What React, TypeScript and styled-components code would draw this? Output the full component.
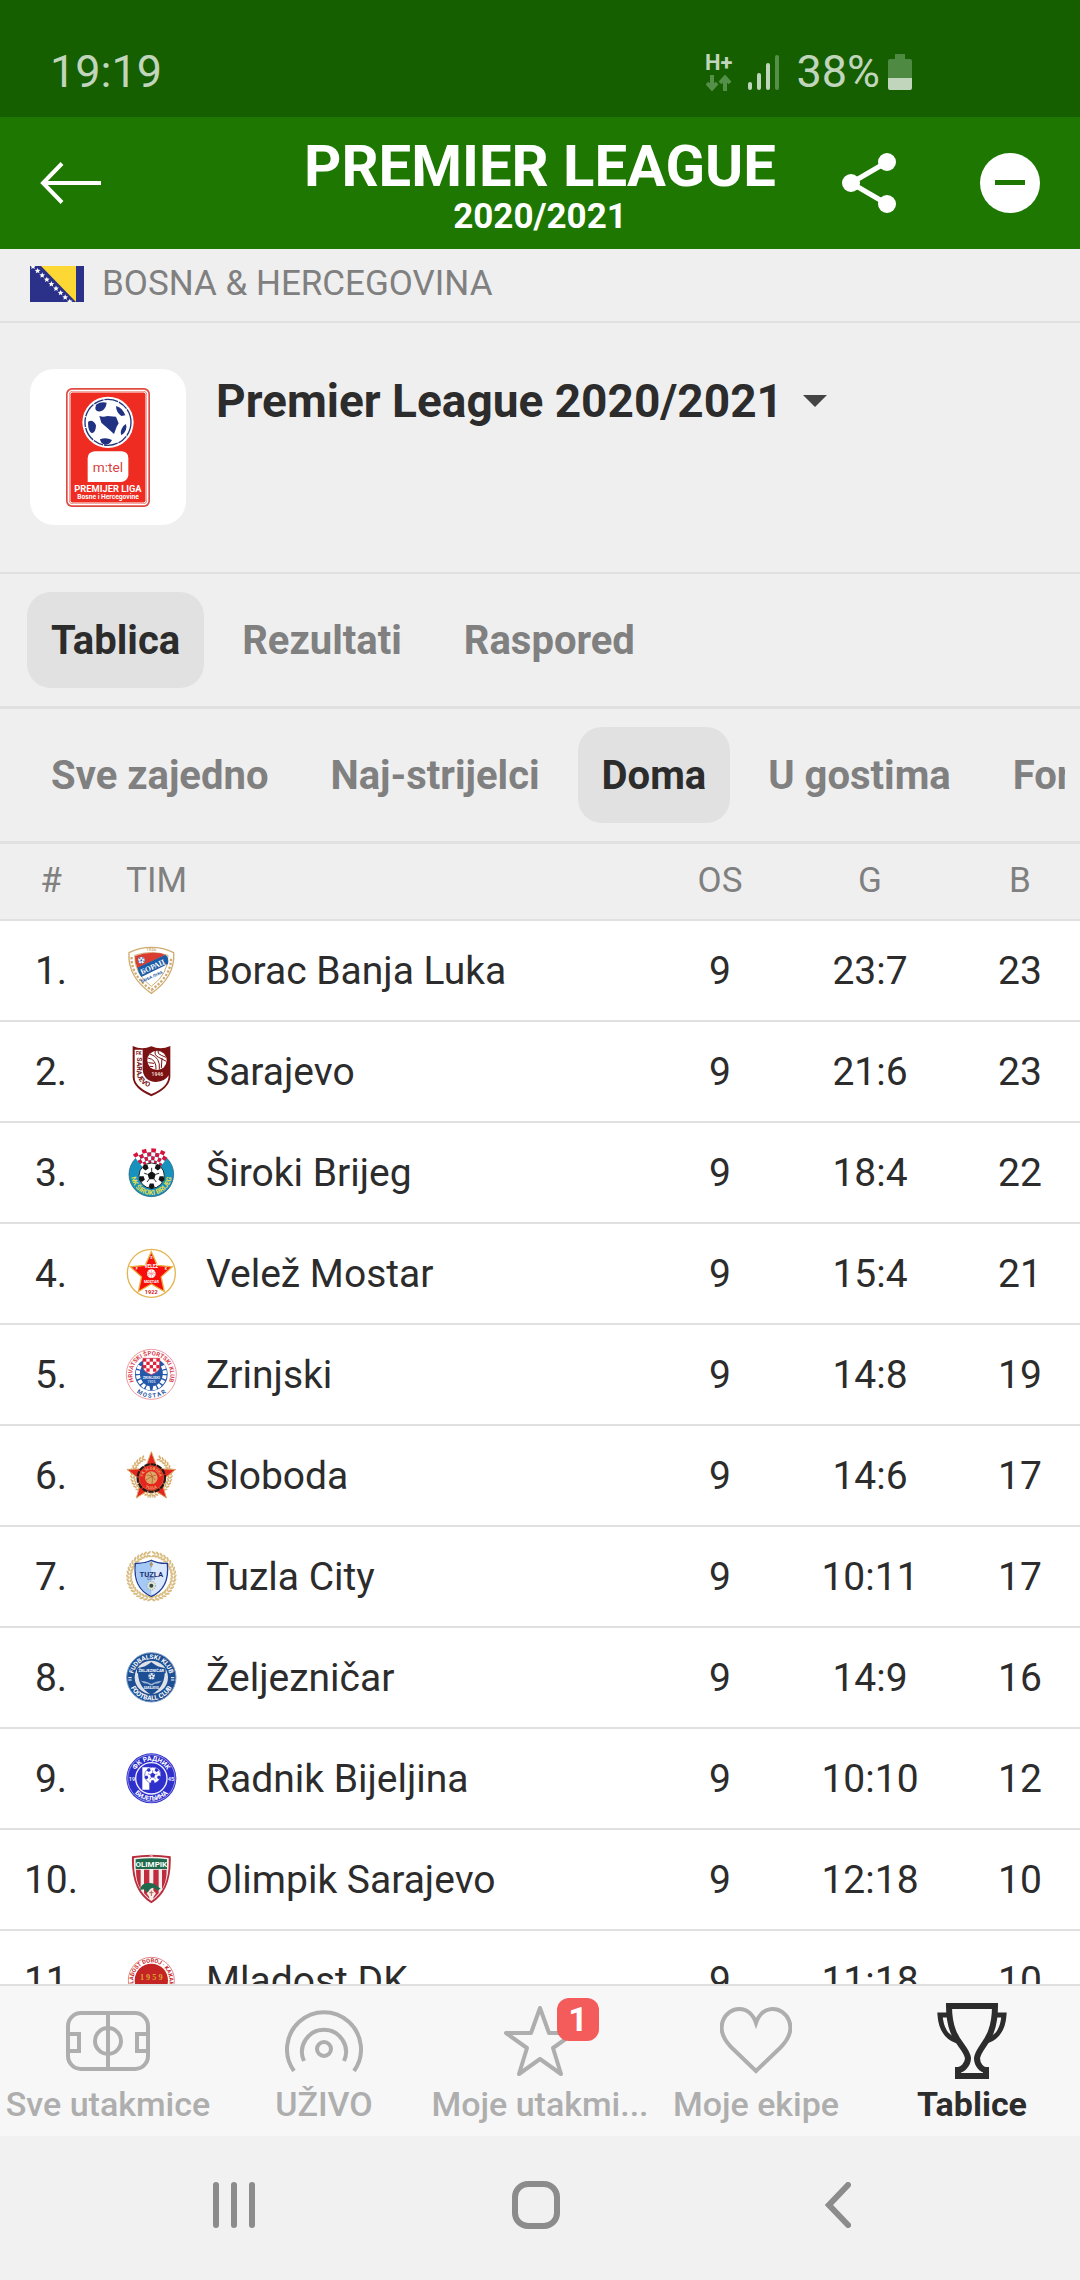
import React, { useState } from "react";
import styled, { createGlobalStyle } from "styled-components";

const color = {
  status: "#155f00",
  header: "#1d7700",
  page: "#efefef",
  line: "#e0e0e0",
  ink: "#2c2c2c",
  muted: "#808080",
  faint: "#aeaeae",
  statusInk: "#c1d5bc",
  statusDim: "#55904a",
};

const GlobalStyle = createGlobalStyle`
  * { box-sizing: border-box; }
  body { margin: 0; background: ${color.page}; }
  body, button, select, table { font-family: Roboto, "Noto Sans", sans-serif; }
  button { border: 0; padding: 0; background: none; color: inherit; cursor: pointer; }
  svg { display: block; flex: none; }
`;

const Screen = styled.div`
  display: flex;
  flex-direction: column;
  height: 100vh;
  overflow: hidden;
  color: ${color.ink};
  background: ${color.page};
`;

const StatusBar = styled.div`
  display: flex;
  align-items: center;
  justify-content: space-between;
  flex: none;
  height: 117px;
  padding: 27px 168px 0 50px;
  background: ${color.status};
  color: ${color.statusInk};
  font-size: 45px;
  line-height: 54px;
`;

const StatusIcons = styled.div`
  display: flex;
  align-items: center;
  gap: 16px;
`;

const BatteryGroup = styled.div`
  display: flex;
  align-items: center;
  gap: 8px;
`;

const NetworkType = styled.div`
  display: flex;
  flex-direction: column;
  align-items: center;
  gap: 2px;
  font-size: 22px;
  line-height: 20px;
  font-weight: 700;
`;

const Header = styled.header`
  display: grid;
  grid-template-columns: 1fr auto 1fr;
  align-items: center;
  flex: none;
  height: 132px;
  padding: 0 40px;
  background: ${color.header};
  color: #fff;
`;

const HeaderTitles = styled.div`
  padding-top: 8px;
  text-align: center;
  font-weight: 700;
`;

const HeaderTitle = styled.h1`
  margin: 0;
  font-size: 58px;
  line-height: 60px;
`;

const HeaderSeason = styled.div`
  font-size: 35px;
  line-height: 42px;
`;

const HeaderActions = styled.div`
  display: flex;
  align-items: center;
  justify-content: flex-end;
  gap: 84px;
`;

const IconButton = styled.button`
  display: flex;
  justify-self: start;
`;

const CountryBar = styled.div`
  display: flex;
  align-items: center;
  gap: 18px;
  flex: none;
  height: 74px;
  padding: 0 30px 2px;
  border-bottom: 2px solid ${color.line};
  color: ${color.muted};
  font-size: 35px;
  line-height: 40px;
`;

const LeagueBar = styled.section`
  display: flex;
  align-items: flex-start;
  gap: 30px;
  flex: none;
  padding: 46px 30px 47px;
  border-bottom: 2px solid ${color.line};
`;

const LogoCard = styled.div`
  display: flex;
  align-items: center;
  justify-content: center;
  width: 156px;
  height: 156px;
  border-radius: 24px;
  background: #fff;
`;

const SeasonPicker = styled.label`
  display: flex;
  align-items: center;
  gap: 20px;
  padding-top: 4px;
`;

const SeasonSelect = styled.select`
  appearance: none;
  border: 0;
  padding: 0;
  background: none;
  color: ${color.ink};
  font-size: 46px;
  font-weight: 700;
  line-height: 56px;
`;

const TabBar = styled.nav`
  display: flex;
  align-items: center;
  flex: none;
  height: 135px;
  padding: 0 15px;
  border-bottom: 3px solid ${color.line};
`;

const TabScroller = styled.div`
  display: flex;
  gap: 14px;
  padding-left: 12px;
  overflow: hidden;
`;

const Tab = styled.button<{ $active: boolean }>`
  flex: none;
  height: 96px;
  padding: 0 24px;
  border-radius: 24px;
  background: ${(p) => (p.$active ? "#e1e1e1" : "transparent")};
  color: ${(p) => (p.$active ? color.ink : color.muted)};
  font-size: 40px;
  font-weight: 700;
`;

const TableArea = styled.main`
  flex: 1;
  min-height: 0;
  overflow-y: auto;
  scrollbar-width: none;
  background: #fff;
`;

const Table = styled.table`
  width: 100%;
  border-collapse: separate;
  border-spacing: 0;
  table-layout: fixed;
`;

const RankCol = styled.col`
  width: 102px;
`;
const CrestCol = styled.col`
  width: 104px;
`;
const PlayedCol = styled.col`
  width: 120px;
`;
const GoalsCol = styled.col`
  width: 180px;
`;
const PointsCol = styled.col`
  width: 120px;
`;

const HeadCell = styled.th<{ $left?: boolean }>`
  height: 77px;
  padding: 0 0 2px;
  border-bottom: 2px solid ${color.line};
  background: ${color.page};
  color: ${color.muted};
  font-size: 35px;
  font-weight: 400;
  line-height: 40px;
  text-align: ${(p) => (p.$left ? "left" : "center")};
  padding-left: ${(p) => (p.$left ? "24px" : "0")};
`;

const Cell = styled.td<{ $left?: boolean }>`
  height: 101px;
  padding: 0;
  border-bottom: 2px solid ${color.line};
  font-size: 39px;
  line-height: 48px;
  text-align: ${(p) => (p.$left ? "left" : "center")};
  white-space: nowrap;
`;

const CrestCell = styled(Cell)`
  padding-left: 24px;
`;

const BottomNav = styled.nav`
  display: grid;
  grid-template-columns: repeat(5, 1fr);
  flex: none;
  height: 152px;
  border-top: 2px solid ${color.line};
  background: #f7f7f7;
`;

const NavItem = styled.button<{ $active?: boolean }>`
  display: flex;
  flex-direction: column;
  align-items: center;
  justify-content: flex-start;
  padding-top: 12px;
  min-width: 0;
  color: ${(p) => (p.$active ? color.ink : color.faint)};
  font-size: 34px;
  font-weight: ${(p) => (p.$active ? 700 : 500)};
  line-height: 40px;
  white-space: nowrap;
`;

const NavIcon = styled.span`
  position: relative;
  display: flex;
  align-items: center;
  justify-content: center;
  height: 86px;
  width: 90px;
`;

const Badge = styled.span`
  position: absolute;
  top: 0;
  right: -14px;
  width: 42px;
  height: 43px;
  border-radius: 12px;
  background: #f45b5b;
  color: #fff;
  font-size: 34px;
  font-weight: 700;
  line-height: 43px;
  text-align: center;
`;

const SystemNav = styled.div`
  display: grid;
  grid-template-columns: repeat(3, 1fr);
  align-items: center;
  justify-items: center;
  flex: none;
  height: 144px;
  padding: 0 91px 6px 83px;
  background: #f1f1f1;
  color: #8c8c8c;
`;

const SystemButton = styled.button`
  display: flex;
`;

/* ---------- crest helpers (153 x 153 drawing units) ---------- */

const C = 76;

function Crest({ name, children }: { name: string; children: React.ReactNode }) {
  return (
    <svg width="51" height="51" viewBox="0 0 153 153" role="img" aria-label={name} overflow="visible">
      {children}
    </svg>
  );
}

function polar(cx: number, cy: number, r: number, deg: number) {
  const a = ((deg - 90) * Math.PI) / 180;
  return `${(cx + r * Math.cos(a)).toFixed(1)} ${(cy + r * Math.sin(a)).toFixed(1)}`;
}

function starPoints(cx: number, cy: number, outer: number, inner: number) {
  return Array.from({ length: 10 }, (_, i) => polar(cx, cy, i % 2 ? inner : outer, i * 36)).join(" ");
}

type ArcTextProps = {
  id: string;
  r: number;
  text: string;
  fill: string;
  size: number;
  bottom?: boolean;
  cy?: number;
};

function ArcText({ id, r, text, fill, size, bottom, cy = C }: ArcTextProps) {
  const d = bottom
    ? `M${polar(C, cy, r, 310)}A${r} ${r} 0 1 0 ${polar(C, cy, r, 50)}`
    : `M${polar(C, cy, r, 230)}A${r} ${r} 0 1 1 ${polar(C, cy, r, 130)}`;
  return (
    <>
      <path id={id} d={d} fill="none" />
      <text fill={fill} fontSize={size} fontWeight="700" textAnchor="middle" fontFamily="Roboto, sans-serif">
        <textPath href={`#${id}`} startOffset="50%">
          {text}
        </textPath>
      </text>
    </>
  );
}

function Label({ x = C, y, size, fill, children, transform, serif }: {
  x?: number; y: number; size: number; fill: string; children: string; transform?: string; serif?: boolean;
}) {
  return (
    <text
      x={x} y={y} fontSize={size} fill={fill} fontWeight="700" textAnchor="middle" transform={transform}
      fontFamily={serif ? '"Liberation Serif", serif' : "Roboto, sans-serif"}
    >
      {children}
    </text>
  );
}

function Ball({ cx, cy, r, dark, light = "#fff" }: { cx: number; cy: number; r: number; dark: string; light?: string }) {
  const penta = (x: number, y: number, s: number, rot: number) =>
    Array.from({ length: 5 }, (_, i) => polar(x, y, s, rot + i * 72)).join(" ");
  return (
    <g>
      <circle cx={cx} cy={cy} r={r} fill={light} stroke={dark} strokeWidth={r / 14} />
      <polygon points={penta(cx, cy, r * 0.34, 0)} fill={dark} />
      {[0, 72, 144, 216, 288].map((a) => {
        const [x, y] = polar(cx, cy, r * 0.82, a + 36).split(" ").map(Number);
        const [sx, sy] = polar(cx, cy, r * 0.34, a).split(" ").map(Number);
        const [ex, ey] = polar(cx, cy, r * 0.62, a).split(" ").map(Number);
        return (
          <g key={a}>
            <polygon points={penta(x, y, r * 0.25, a + 36)} fill={dark} />
            <path d={`M${sx} ${sy}L${ex} ${ey}`} stroke={dark} strokeWidth={r / 14} />
          </g>
        );
      })}
    </g>
  );
}

function Laurel({ r, size, from, to, fill, count }: { r: number; size: number; from: number; to: number; fill: string; count: number }) {
  return (
    <g fill={fill}>
      {Array.from({ length: count }, (_, i) => {
        const deg = from + ((to - from) * i) / (count - 1);
        const tilt = deg > 180 ? -32 : 32;
        return (
          <g key={i} transform={`rotate(${deg} ${C} ${C})`}>
            <ellipse cx={C} cy={C - r} rx={size * 0.62} ry={size * 0.26} transform={`rotate(${tilt} ${C} ${C - r})`} />
            <ellipse cx={C} cy={C - r + size * 0.8} rx={size * 0.62} ry={size * 0.26} transform={`rotate(${-tilt} ${C} ${C - r + size * 0.8})`} />
          </g>
        );
      })}
    </g>
  );
}

function Borac() {
  return (
    <Crest name="Borac Banja Luka">
      <path d="M9 23Q40 7 76 7Q112 7 143 23Q148 96 76 145Q4 96 9 23Z" fill="#fff" stroke="#cfac71" strokeWidth="4" />
      <path d="M17 36Q14 90 76 135Q138 90 135 36" fill="none" stroke="#cfac71" strokeWidth="7" strokeDasharray="7 5" />
      <path d="M26 31Q76 14 126 31Q128 86 76 124Q24 86 26 31Z" fill="#fff" stroke="#cfac71" strokeWidth="3" />
      <path d="M27 33Q64 20 104 25L118 30L34 70Q26 52 27 33Z" fill="#da3d30" />
      <path d="M34 68L118 29Q130 36 126 57L46 96Q38 86 34 68Z" fill="#1c5ca6" />
      <Ball cx={46} cy={46} r={10} dark="#2c5fb0" />
      <Label x={80} y={73} size={23} fill="#fff" transform="rotate(-24 80 66)" serif>БОРАЦ</Label>
      <Label y={98} size={12} fill="#1c5ca6" transform="rotate(-24 80 92)">БАЊА ЛУКА</Label>
      <Label y={19} size={13} fill="#cfac71">1926</Label>
    </Crest>
  );
}

function Sarajevo() {
  return (
    <Crest name="Sarajevo">
      <path d="M20 0Q48 13 76 1Q104 13 133 0V94Q130 128 76 151Q22 128 20 94Z" fill="#7a1214" />
      <path d="M26 11Q38 12 50 11V72Q54 106 90 108Q118 106 128 88Q128 124 76 144Q26 122 26 94Z" fill="#fff" />
      <circle cx="93" cy="43" r="29" fill="#fff" />
      <path d="M66 36Q92 40 90 71M72 24Q104 34 100 70M88 15Q84 28 98 34L121 46M96 15Q94 24 106 28L120 34M108 36L106 66M67 50L84 52M72 61L82 62" fill="none" stroke="#7a1214" strokeWidth="3" />
      <Label x={94} y={91} size={15} fill="#efd9c8">1946</Label>
      <Label x={38} y={28} size={14} fill="#7a1214">FK</Label>
      <path id="sarajevo-arc" d="M32 34V80Q36 116 78 126Q100 120 118 106" fill="none" />
      <text fontSize="21" fontWeight="700" fill="#7a1214" fontFamily="Roboto, sans-serif">
        <textPath href="#sarajevo-arc">SARAJEVO</textPath>
      </text>
    </Crest>
  );
}

function Siroki() {
  const cells = [];
  for (let row = 0; row < 4; row++) {
    for (let col = 0; col < 8; col++) {
      const a0 = -38 + col * 9.5;
      const r0 = 90 - row * 12;
      const p = [
        polar(C, 94, r0, a0), polar(C, 94, r0, a0 + 9.5),
        polar(C, 94, r0 - 12, a0 + 9.5), polar(C, 94, r0 - 12, a0),
      ].join(" ");
      cells.push(<polygon key={`${row}-${col}`} points={p} fill={(row + col) % 2 ? "#fff" : "#d8143c"} />);
    }
  }
  return (
    <Crest name="Široki Brijeg">
      <circle cx={C} cy="82" r="67" fill="#1792bf" stroke="#24576c" strokeWidth="2" />
      {cells}
      <Ball cx={77} cy={86} r={38} dark="#141414" />
      <ArcText id="siroki-arc" r={61} cy={83} text="NK ŠIROKI BRIJEG" fill="#e9df4c" size={21} bottom />
    </Crest>
  );
}

function Velez() {
  return (
    <Crest name="Velež Mostar">
      <circle cx={C} cy={C} r="72" fill="#fff" stroke="#e2b552" strokeWidth="4" />
      <polygon points={starPoints(76, 77, 66, 31)} fill="#f80d0d" stroke="#e9b040" strokeWidth="4" />
      <Label y={32} size={11} fill="#fff">S</Label>
      <Label x={32} y={66} size={11} fill="#fff">F</Label>
      <Label x={120} y={66} size={11} fill="#fff">K</Label>
      <Label y={60} size={14} fill="#fff">VELEŽ</Label>
      <circle cx={C} cy="77" r="13" fill="#fff" />
      <path d="M66 70L86 84M66 84L86 70M76 64V90M63 77H89" stroke="#f88" strokeWidth="2" />
      <Label y={105} size={11} fill="#fff">MOSTAR</Label>
      <Label y={138} size={17} fill="#d02020">1922</Label>
    </Crest>
  );
}

function Zrinjski() {
  return (
    <Crest name="Zrinjski">
      <circle cx={C} cy={C} r="75" fill="#fff" stroke="#e26a75" strokeWidth="2" />
      <ArcText id="zrinjski-top" r={57} text="HRVATSKI ŠPORTSKI KLUB" fill="#d9414f" size={18} />
      <ArcText id="zrinjski-bottom" r={70} text="M O S T A R" fill="#2c57a6" size={18} bottom />
      <circle cx={C} cy={C} r="49" fill="#2458a8" />
      <path d="M42 50Q28 76 44 100Q58 120 72 116M110 50Q124 76 108 100Q94 120 80 116" fill="none" stroke="#fff" strokeWidth="12" strokeDasharray="11 4" />
      <path d="M51 28H101V56Q99 68 76 77Q53 68 51 56Z" fill="#fff" stroke="#d61f36" strokeWidth="2" />
      {[0, 1, 2, 3].map((row) =>
        [0, 1, 2, 3, 4].map((col) =>
          (row + col) % 2 === 0 ? <rect key={`${row}${col}`} x={51 + col * 10} y={28 + row * 10} width="10" height="10" fill="#e0213a" /> : null
        )
      )}
      <Label y={89} size={12} fill="#e3ecf8">ZRINJSKI</Label>
      <Label y={101} size={11} fill="#b9cdea">1905</Label>
    </Crest>
  );
}

function Sloboda() {
  return (
    <Crest name="Sloboda">
      <Laurel r={60} size={10} from={25} to={335} count={32} fill="#d6ad6a" />
      <polygon points={starPoints(76, 82, 77, 32)} fill="#e5261e" stroke="#d9a968" strokeWidth="3" />
      <circle cx={C} cy="84" r="41" fill="#e5261e" stroke="#251a16" strokeWidth="7" strokeDasharray="16 3" />
      <circle cx={C} cy="84" r="37" fill="none" stroke="#d9a968" strokeWidth="1" />
      <ArcText id="sloboda-top" r={25} cy={84} text="FK SLOBODA" fill="#e9b070" size={12} />
      <ArcText id="sloboda-bottom" r={34} cy={84} text="TUZLA" fill="#e9b070" size={12} bottom />
      <circle cx={C} cy="83" r="19" fill="#dda866" />
      <path d="M62 76Q74 72 88 90M72 66Q82 76 78 102M60 90Q72 80 92 74" fill="none" stroke="#b2522c" strokeWidth="2" />
      <Label y={144} size={12} fill="#c9a262">1919</Label>
    </Crest>
  );
}

function Tuzla() {
  return (
    <Crest name="Tuzla City">
      <Laurel r={71} size={12} from={6} to={354} count={38} fill="#d8bc80" />
      <circle cx={C} cy={C} r="57" fill="#fff" />
      <path d="M28 37Q56 38 76 28Q96 38 124 37Q132 112 76 136Q20 112 28 37Z" fill="#d9e8fc" stroke="#1e3c96" strokeWidth="4" />
      <path d="M30 39Q56 40 76 31V134Q24 110 30 39Z" fill="#a4c9f6" />
      <path d="M76 30L81 40L76 50L71 40Z" fill="#a8986a" />
      <Label y={77} size={23} fill="#1c2f70">TUZLA</Label>
      <Label y={88} size={11} fill="#49639c">CITY</Label>
      <circle cx={C} cy="104" r="13" fill="#dfe4d2" stroke="#7f8b90" strokeWidth="2" strokeDasharray="4 3" />
      <circle cx={C} cy="104" r="6" fill="#2c4a4a" />
    </Crest>
  );
}

function Zeljeznicar() {
  return (
    <Crest name="Željezničar">
      <circle cx={C} cy={C} r="74" fill="#1d4f94" stroke="#7c9cc4" strokeWidth="3" />
      <circle cx={C} cy={C} r="50" fill="#dfe2e7" />
      <ArcText id="zeljo-top" r={55} text="FUDBALSKI KLUB" fill="#fff" size={19} />
      <ArcText id="zeljo-bottom" r={69} text="FOOTBALL CLUB" fill="#fff" size={20} bottom />
      <path d="M7 77h10M7 84h10M135 77h10M135 84h10" stroke="#fff" strokeWidth="3" />
      <path d="M36 48Q58 46 76 30Q94 46 116 48Q120 106 76 128Q32 106 36 48Z" fill="#1d4f94" />
      <rect x="33" y="49" width="86" height="15" rx="2" fill="#1d4f94" />
      <Label y={60} size={12} fill="#fff">ŽELJEZNIČAR</Label>
      <Ball cx={77} cy={73} r={10} dark="#1d4f94" />
      <path d="M44 86Q66 88 76 96Q86 88 108 86L98 94Q84 94 80 100H72Q68 94 54 94Z" fill="#9fb6d6" />
      <Label y={111} size={9} fill="#fff">SARAJEVO</Label>
    </Crest>
  );
}

function Radnik() {
  return (
    <Crest name="Radnik Bijeljina">
      <circle cx={C} cy={C} r="75" fill="#2f2fcb" />
      <circle cx={C} cy={C} r="71" fill="none" stroke="#c9c9f5" strokeWidth="2" />
      <circle cx={C} cy={C} r="47" fill="none" stroke="#f2f2ff" strokeWidth="4" />
      <ArcText id="radnik-top" r={53} text="ФК  РАДНИК" fill="#fff" size={20} />
      <ArcText id="radnik-bottom" r={67} text="БИЈЕЉИНА" fill="#fff" size={20} bottom />
      <Label x={18} y={83} size={17} fill="#e6e6fb">19</Label>
      <Label x={135} y={83} size={17} fill="#e6e6fb">45</Label>
      <path d="M49 43H86Q106 48 104 66Q100 92 70 90V110H49Z" fill="#fff" />
      <Ball cx={80} cy={67} r={24} dark="#2f2fcb" />
    </Crest>
  );
}

function Olimpik() {
  return (
    <Crest name="Olimpik Sarajevo">
      <path d="M18 7Q76 -2 134 7Q138 110 76 148Q14 110 18 7Z" fill="#b92c3b" />
      <path d="M24 12Q76 4 128 12Q132 106 76 141Q20 106 24 12Z" fill="#f3efec" />
      <path d="M29 16Q76 9 123 16V45H29Z" fill="#1f6a4c" />
      <path d="M30 47H44V106Q30 84 30 47ZM54 47H70V134L54 118ZM82 47H98V118L82 134ZM108 47H122Q122 84 108 106Z" fill="#c22b3d" />
      <path d="M42 108Q46 88 62 88Q84 84 98 100L104 104L92 110L88 104Q80 98 72 106L62 116L54 106Z" fill="#1f6a4c" />
      <path d="M76 104L90 118L76 138L62 118Z" fill="#f3efec" />
      <path d="M76 110V126M70 116H82" stroke="#b46a4a" strokeWidth="3" />
      <Label y={38} size={24} fill="#fff">OLIMPIK</Label>
      <Label y={10} size={8} fill="#f6d8dc">FK</Label>
    </Crest>
  );
}

function Mladost() {
  return (
    <Crest name="Mladost DK">
      <circle cx={C} cy={C} r="69" fill="#fff" stroke="#cf4a4a" strokeWidth="2" />
      <ArcText id="mladost-arc" r={54} text="MLADOST DOBOJ · KAKANJ" fill="#c62626" size={17} />
      <circle cx={C} cy={C} r="50" fill="#c42424" />
      <Label y={74} size={25} fill="#dba032" serif>1 9 5 9</Label>
    </Crest>
  );
}

function LeagueLogo() {
  return (
    <svg width="84" height="119" viewBox="0 0 252 357" role="img" aria-label="m:tel Premijer liga">
      <rect width="252" height="357" rx="18" fill="#dd4b42" />
      <rect x="5" y="5" width="242" height="347" rx="14" fill="#fff" />
      <rect x="9" y="9" width="234" height="339" rx="12" fill="#e2564e" />
      <rect x="12" y="12" width="228" height="333" rx="8" fill="#ee2c22" stroke="#fff" strokeWidth="3" />
      <circle cx="126" cy="103" r="77" fill="#fff" />
      <circle cx="126" cy="103" r="69" fill="none" stroke="#24367c" strokeWidth="4" strokeDasharray="42 3 30 3" />
      <path d="M90 50Q104 40 122 44Q120 64 104 70Q88 72 88 60ZM150 54Q170 60 178 82L166 84Q150 72 150 54ZM68 100Q82 94 90 112Q90 132 78 136Q66 130 66 104ZM180 108Q186 128 166 142Q160 132 172 114ZM102 154Q120 146 138 156Q132 170 118 170Q104 168 102 154Z" fill="#213283" />
      <path d="M100 84Q112 88 124 84L150 86L158 106L152 116L144 138L124 120L106 104Z" fill="#213283" />
      <path d="M86 190H168Q187 192 187 210V262Q184 281 164 282H65V210Q66 192 86 190Z" fill="#fff" />
      <text x="126" y="252" fontSize="41" fill="#d8413c" textAnchor="middle" fontFamily="Roboto, sans-serif">m:tel</text>
      <text x="126" y="312" fontSize="28" fontWeight="700" fill="#fff" textAnchor="middle" fontFamily="Roboto, sans-serif">PREMIJER LIGA</text>
      <text x="126" y="332" fontSize="20" fontWeight="700" fill="#fff" textAnchor="middle" fontFamily="Roboto, sans-serif">Bosne i Hercegovine</text>
    </svg>
  );
}

function Flag() {
  const stars = Array.from({ length: 9 }, (_, i) => [3 + i * 4.6, 0.5 + i * 4.4]);
  return (
    <svg width="54" height="36" viewBox="0 0 54 36" role="img" aria-label="Bosna i Hercegovina">
      <rect width="54" height="36" fill="#2b3088" />
      <path d="M11 0H46V36Z" fill="#fdd835" />
      {stars.map(([x, y]) => (
        <polygon key={x} points={starPoints(x, y, 3, 1.4)} fill="#fff" />
      ))}
    </svg>
  );
}

/* ---------- interface icons ---------- */

const BackArrow = () => (
  <svg width="61" height="42" viewBox="0 0 61 42" fill="none" stroke="#fff" strokeWidth="4">
    <path d="M61 21H3M22 1.500L3 21L22 40.500" />
  </svg>
);

const ShareIcon = () => (
  <svg width="54" height="60" viewBox="0 0 54 60" fill="#fff" stroke="#fff">
    <path d="M45 9L9 30L45 51" fill="none" strokeWidth="5" />
    <circle cx="45" cy="9" r="9" stroke="none" />
    <circle cx="9" cy="30" r="9" stroke="none" />
    <circle cx="45" cy="51" r="9" stroke="none" />
  </svg>
);

const MinusIcon = () => (
  <svg width="60" height="60" viewBox="0 0 60 60">
    <circle cx="30" cy="30" r="30" fill="#fff" />
    <rect x="15" y="27" width="30" height="5" fill={color.header} />
  </svg>
);

const DataArrows = () => (
  <svg width="26" height="16" viewBox="0 0 26 16" fill="none" stroke={color.statusDim} strokeWidth="4">
    <path d="M6 0V13M1 8L6 13.500L11 8M19 16V3M14 8L19 2.500L24 8" />
  </svg>
);

const SignalIcon = () => (
  <svg width="32" height="35" viewBox="0 0 32 35" strokeWidth="4" stroke={color.statusInk} strokeLinecap="round">
    <path d="M2 29V33M11 20V33M20 10V33" />
    <path d="M29 2V33" stroke={color.statusDim} />
  </svg>
);

const BatteryIcon = () => (
  <svg width="24" height="36" viewBox="0 0 24 36">
    <path d="M7 0H17V5H22Q24 5 24 7V24H0V7Q0 5 2 5H7Z" fill="#4f8a43" />
    <path d="M0 24H24V34Q24 36 22 36H2Q0 36 0 34Z" fill={color.statusInk} />
  </svg>
);

const Caret = () => (
  <svg width="24" height="12" viewBox="0 0 24 12">
    <path d="M0 0H24L12 12Z" fill="#444" />
  </svg>
);

const PitchIcon = () => (
  <svg width="84" height="60" viewBox="0 0 84 60" fill="none" stroke="currentColor" strokeWidth="4">
    <rect x="2" y="2" width="80" height="56" rx="13" />
    <path d="M42 2V58M2 23H13V40H2M82 23H71V40H82" />
    <circle cx="42" cy="30" r="13" />
  </svg>
);

const LiveIcon = () => (
  <svg width="78" height="62" viewBox="0 0 78 62" fill="none" stroke="currentColor" strokeWidth="4">
    <path d="M9 61A37 37 0 1 1 69 61M19 51A22 22 0 1 1 59 51" />
    <circle cx="39" cy="39" r="7" />
  </svg>
);

const StarIcon = () => (
  <svg width="74" height="72" viewBox="0 0 74 72" fill="none" stroke="currentColor" strokeWidth="4" strokeLinejoin="round">
    <path d="M37 3L46 28H71L50 43L58 69L37 54L16 69L24 43L3 28H28Z" />
  </svg>
);

const HeartIcon = () => (
  <svg width="72" height="68" viewBox="0 0 72 68" fill="none" stroke="currentColor" strokeWidth="4">
    <path d="M36 64L11 40C-8 20 6 2 19 2C29 2 34 10 36 16C38 10 43 2 53 2C66 2 80 20 61 40Z" />
  </svg>
);

const TrophyIcon = () => (
  <svg width="70" height="76" viewBox="0 0 70 76" fill="none" stroke="currentColor" strokeWidth="6">
    <path d="M12 3H58C58 38 42 42 40 55C40 62 45 67 49 67V73H21V67C25 67 31 62 31 55C29 42 12 38 12 3Z" />
    <path d="M12 12H3C4 26 9 34 20 38M58 12H67C66 26 61 34 50 38" strokeWidth="5" />
  </svg>
);

const RecentsIcon = () => (
  <svg width="42" height="46" viewBox="0 0 42 46" stroke="currentColor" strokeWidth="6" strokeLinecap="round">
    <path d="M3 3V43M21 3V43M39 3V43" />
  </svg>
);

const HomeIcon = () => (
  <svg width="48" height="48" viewBox="0 0 48 48" fill="none" stroke="currentColor" strokeWidth="6">
    <rect x="3" y="3" width="42" height="42" rx="13" />
  </svg>
);

const SystemBackIcon = () => (
  <svg width="26" height="46" viewBox="0 0 26 46" fill="none" stroke="currentColor" strokeWidth="6" strokeLinecap="round">
    <path d="M23 3L4 23L23 43" />
  </svg>
);

/* ---------- data ---------- */

const teams = [
  { name: "Borac Banja Luka", Logo: Borac, played: 9, goals: "23:7", points: 23 },
  { name: "Sarajevo", Logo: Sarajevo, played: 9, goals: "21:6", points: 23 },
  { name: "Široki Brijeg", Logo: Siroki, played: 9, goals: "18:4", points: 22 },
  { name: "Velež Mostar", Logo: Velez, played: 9, goals: "15:4", points: 21 },
  { name: "Zrinjski", Logo: Zrinjski, played: 9, goals: "14:8", points: 19 },
  { name: "Sloboda", Logo: Sloboda, played: 9, goals: "14:6", points: 17 },
  { name: "Tuzla City", Logo: Tuzla, played: 9, goals: "10:11", points: 17 },
  { name: "Željezničar", Logo: Zeljeznicar, played: 9, goals: "14:9", points: 16 },
  { name: "Radnik Bijeljina", Logo: Radnik, played: 9, goals: "10:10", points: 12 },
  { name: "Olimpik Sarajevo", Logo: Olimpik, played: 9, goals: "12:18", points: 10 },
  { name: "Mladost DK", Logo: Mladost, played: 9, goals: "11:18", points: 10 },
];

const sections = ["Tablica", "Rezultati", "Raspored"];
const views = ["Sve zajedno", "Naj-strijelci", "Doma", "U gostima", "Forma"];

const navItems = [
  { label: "Sve utakmice", Icon: PitchIcon },
  { label: "UŽIVO", Icon: LiveIcon },
  { label: "Moje utakmi...", Icon: StarIcon, badge: 1 },
  { label: "Moje ekipe", Icon: HeartIcon },
  { label: "Tablice", Icon: TrophyIcon, active: true },
];

export default function App() {
  const [section, setSection] = useState("Tablica");
  const [view, setView] = useState("Doma");

  return (
    <Screen>
      <GlobalStyle />
      <StatusBar>
        <span>19:19</span>
        <StatusIcons>
          <NetworkType>
            <span>H+</span>
            <DataArrows />
          </NetworkType>
          <SignalIcon />
          <BatteryGroup>
            <span>38%</span>
            <BatteryIcon />
          </BatteryGroup>
        </StatusIcons>
      </StatusBar>

      <Header>
        <IconButton aria-label="Natrag"><BackArrow /></IconButton>
        <HeaderTitles>
          <HeaderTitle>PREMIER LEAGUE</HeaderTitle>
          <HeaderSeason>2020/2021</HeaderSeason>
        </HeaderTitles>
        <HeaderActions>
          <IconButton aria-label="Podijeli"><ShareIcon /></IconButton>
          <IconButton aria-label="Ukloni"><MinusIcon /></IconButton>
        </HeaderActions>
      </Header>

      <CountryBar>
        <Flag />
        <span>BOSNA &amp; HERCEGOVINA</span>
      </CountryBar>

      <LeagueBar>
        <LogoCard><LeagueLogo /></LogoCard>
        <SeasonPicker>
          <SeasonSelect aria-label="Sezona">
            <option>Premier League 2020/2021</option>
          </SeasonSelect>
          <Caret />
        </SeasonPicker>
      </LeagueBar>

      <TabBar>
        <TabScroller>
          {sections.map((name) => (
            <Tab key={name} $active={name === section} onClick={() => setSection(name)}>{name}</Tab>
          ))}
        </TabScroller>
      </TabBar>
      <TabBar>
        <TabScroller>
          {views.map((name) => (
            <Tab key={name} $active={name === view} onClick={() => setView(name)}>{name}</Tab>
          ))}
        </TabScroller>
      </TabBar>

      <TableArea>
        <Table>
          <colgroup>
            <RankCol />
            <CrestCol />
            <col />
            <PlayedCol />
            <GoalsCol />
            <PointsCol />
          </colgroup>
          <thead>
            <tr>
              <HeadCell>#</HeadCell>
              <HeadCell $left colSpan={2}>TIM</HeadCell>
              <HeadCell>OS</HeadCell>
              <HeadCell>G</HeadCell>
              <HeadCell>B</HeadCell>
            </tr>
          </thead>
          <tbody>
            {teams.map(({ name, Logo, played, goals, points }, i) => (
              <tr key={name}>
                <Cell>{i + 1}.</Cell>
                <CrestCell><Logo /></CrestCell>
                <Cell $left>{name}</Cell>
                <Cell>{played}</Cell>
                <Cell>{goals}</Cell>
                <Cell>{points}</Cell>
              </tr>
            ))}
          </tbody>
        </Table>
      </TableArea>

      <BottomNav>
        {navItems.map(({ label, Icon, badge, active }) => (
          <NavItem key={label} $active={active}>
            <NavIcon>
              <Icon />
              {badge && <Badge>{badge}</Badge>}
            </NavIcon>
            <span>{label}</span>
          </NavItem>
        ))}
      </BottomNav>

      <SystemNav>
        <SystemButton aria-label="Nedavno"><RecentsIcon /></SystemButton>
        <SystemButton aria-label="Početna"><HomeIcon /></SystemButton>
        <SystemButton aria-label="Natrag"><SystemBackIcon /></SystemButton>
      </SystemNav>
    </Screen>
  );
}
